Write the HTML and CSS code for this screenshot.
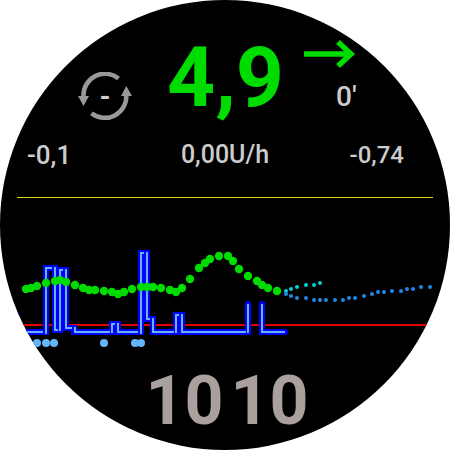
FILE: index.html
```html
<!DOCTYPE html>
<html lang="de">
<head>
<meta charset="utf-8">
<title>Watch face</title>
<link rel="stylesheet" href="styles.css">
</head>
<body>
<main class="face">
  <header class="top">
    <div class="loop">
      <svg class="loop-ring" viewBox="0 0 56 50" aria-hidden="true">
        <g fill="none" stroke="#999" stroke-width="4.500">
          <path d="M41.500 6.500A21.500 21.500 0 0 0 6.500 24V27"/>
          <path d="M14.500 41.200A21.500 21.500 0 0 0 49.300 23V20"/>
        </g>
        <path fill="#999" d="M1 24H12L6.500 34ZM44 24H55L49.300 14Z"/>
      </svg>
      <span class="loop-text">-</span>
    </div>
    <div class="glucose">4,9</div>
    <div class="trend">
      <svg class="arrow" viewBox="0 0 52 28" aria-label="steady">
        <path d="M0 14H46M34 2L47 14L34 26" fill="none" stroke="#00dc00" stroke-width="5.500"/>
      </svg>
      <span class="age">0'</span>
    </div>
  </header>
  <div class="stats">
    <span>-0,1</span>
    <span class="basal-rate">0,00U/h</span>
    <span class="delta">-0,74</span>
  </div>
  <hr class="rule">
  <svg class="chart" viewBox="0 198 450 158" aria-label="Glucose and basal history">
    <path class="limit" d="M22 325H428"/>
    <g id="basal"></g>
    <g id="dots"></g>
  </svg>
  <div class="clock"><span>10</span><span>10</span></div>
</main>
<script src="chart.js"></script>
</body>
</html>
```
FILE: styles.css
```css
* { box-sizing: border-box; }

body {
  margin: 0;
  background: #fff;
  color: #ccc;
  font-family: Roboto, "Liberation Sans", sans-serif;
  font-weight: 700;
}

.face {
  width: 100%;
  max-width: 100vmin;
  aspect-ratio: 1;
  margin: 0 auto;
  display: flex;
  flex-direction: column;
  overflow: hidden;
  border-radius: 50%;
  background: #000;
}

.top {
  display: grid;
  grid-template-columns: 167px 1fr 167px;
  height: 138px;
  padding-top: 28px;
}

.loop {
  display: grid;
  justify-self: end;
  width: 56px;
  height: 50px;
  margin: 44px 34px 0 0;
  place-items: center;
}

.loop-ring, .loop-text { grid-area: 1 / 1; }
.loop-ring { width: 56px; height: 50px; }
.loop-text { font-size: 28px; line-height: 50px; }

.glucose {
  justify-self: center;
  color: #00dc00;
  font-size: 84px;
  line-height: 100px;
}

.trend {
  display: flex;
  flex-direction: column;
  align-items: start;
  padding: 12px 0 0 20px;
}

.arrow { width: 52px; height: 28px; }
.age { margin: 12px 0 0 32px; font-size: 28px; line-height: 34px; font-weight: 500; }

.stats {
  display: grid;
  grid-template-columns: 1fr auto 1fr;
  align-items: center;
  height: 32px;
  padding: 0 27px;
  font-size: 26px;
  line-height: 34px;
  font-weight: 500;
}

.basal-rate { font-size: 25px; }
.delta { justify-self: end; margin-right: 19px; font-size: 24px; }

.rule {
  width: calc(100% - 34px);
  height: 1px;
  margin: 27px auto 0;
  border: 0;
  background: #dcd814;
}

.chart { display: block; width: 100%; flex: none; }

.limit { stroke: #e00000; stroke-width: 2; }
.basal-edge, .basal-core { fill: none; }
.basal-edge { stroke: #00f; stroke-width: 6; stroke-linecap: round; }
.basal-core { stroke: #64b4fa; stroke-width: 2; }
.bg { fill: #00dc00; }
.bolus { fill: #64b4fa; }
.pred-iob { fill: #1e88e5; }
.pred-uam { fill: #00d2d2; }

.clock {
  display: flex;
  justify-content: center;
  gap: 7px;
  margin-top: 4px;
  padding-left: 4px;
  color: #aaa09e;
  font-size: 68px;
  line-height: 82px;
}
```
FILE: chart.js
```js
const NS = "http://www.w3.org/2000/svg";

function add(parent, tag, attrs) {
  const el = document.createElementNS(NS, tag);
  for (const key in attrs) el.setAttribute(key, attrs[key]);
  document.getElementById(parent).append(el);
}

const edge = "M16 314V315M20 332H46V268H55V330H60V270H66V328H74V332H112V324H118V332H141V253H147V319H153V332H176V315H182V332H248V304M262 304V332H285";
const core = "M20 332H43M46 334V268H52M55 267V330H58M60 331V270H63M66 269V328H72M75 327V332H110M112 333V324H115M118 323V332H138M141 334V253H144M147 252V319H150M153 318V332H174M176 333V315H179M182 314V332H246M248 333V304M262 304V332H285";
add("basal", "path", { class: "basal-edge", d: edge });
add("basal", "path", { class: "basal-core", d: core });

const series = [
  { name: "bg", r: 4.2, points: [[26,289],[31,288],[37,286],[46,283],[55,281],[60,280],[66,282],[75,285],[83,288],[89,290],[95,290],[104,291],[112,292],[118,294],[124,292],[132,289],[141,287],[147,287],[153,287],[161,288],[170,290],[176,292],[182,288],[190,279],[199,268],[205,263],[210,259],[219,256],[228,256],[233,261],[239,269],[248,276],[257,281],[262,285],[268,288],[277,291]] },
  { name: "bolus", r: 4, points: [[37,343],[46,343],[54,343],[104,343],[135,343],[141,343]] },
  { name: "pred-uam", r: 2, points: [[286,291],[291,289],[297,287],[306,285],[314,285],[320,283]] },
  { name: "pred-iob", r: 2, points: [[286,294],[291,296],[297,298],[306,298],[314,300],[320,300],[326,300],[335,300],[343,300],[349,298],[355,298],[364,296],[372,294],[378,292],[384,292],[392,291],[401,291],[407,289],[413,289],[421,287],[430,287]] }
];

for (const { name, r, points } of series) {
  for (const [cx, cy] of points) add("dots", "circle", { class: name, cx, cy, r });
}
```
